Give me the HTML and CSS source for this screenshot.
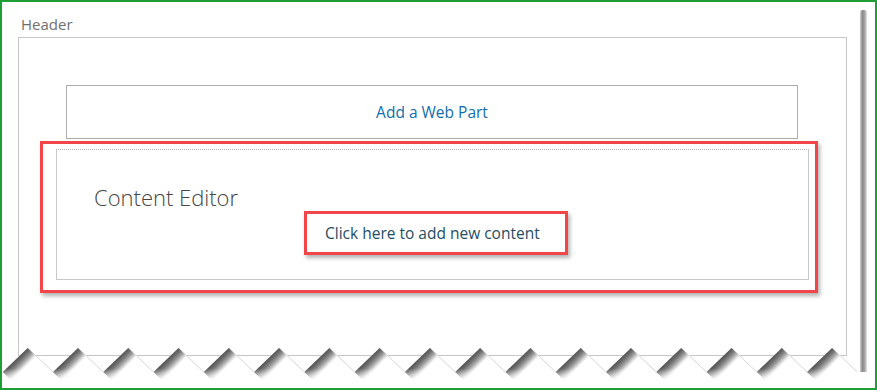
FILE: index.html
```html
<!DOCTYPE html>
<html lang="en">
  <head>
    <meta charset="UTF-8" />
    <title>Content Editor</title>
    <link rel="stylesheet" href="styles.css">
  </head>
  <body>
    <div class="frame">
      <div class="page">
        <div class="zone-label">Header</div>
        <div class="zone">
          <div class="add-part">Add a Web Part</div>
          <div class="highlight">
            <div class="editor">
              <div class="editor-title">Content Editor</div>
              <div class="click-box">Click here to add new content</div>
            </div>
          </div>
        </div>
      </div>
      <div class="edge-shadow"></div>

      <svg class="torn" viewBox="0 338 877 50" width="877" height="50">
        <defs>
          <linearGradient id="shade" gradientUnits="userSpaceOnUse" x1="12.5" y1="12.5" x2="21" y2="21">
            <stop offset="0" stop-color="#555555" />
            <stop offset="0.3" stop-color="#747474" />
            <stop offset="0.6" stop-color="#a8a8a8" />
            <stop offset="0.85" stop-color="#e2e2e2" />
            <stop offset="1" stop-color="#ffffff" />
          </linearGradient>
          <linearGradient id="fade" gradientUnits="userSpaceOnUse" x1="0" y1="0" x2="0" y2="34">
            <stop offset="0" stop-color="#fff" />
            <stop offset="0.6" stop-color="#fff" />
            <stop offset="1" stop-color="#000" />
          </linearGradient>
          <mask id="fade-mask" maskUnits="userSpaceOnUse" x="-5" y="-5" width="60" height="45">
            <rect x="-5" y="-5" width="60" height="45" fill="url(#fade)" />
          </mask>
          <g id="tooth">
            <polygon points="0,24 25,0 50.3,24 50.3,60 0,60" fill="#fff" />
            <polyline points="25,0 50.3,24" fill="none" stroke="#d6d6d6" stroke-width="1" />
            <polygon points="0,24 25,0 34,9 9,33" fill="url(#shade)" mask="url(#fade-mask)" />
          </g>
        </defs>
        <use href="#tooth" x="2.7" y="348" />
        <use href="#tooth" x="52.97" y="348" />
        <use href="#tooth" x="103.24" y="348" />
        <use href="#tooth" x="153.51" y="348" />
        <use href="#tooth" x="203.78" y="348" />
        <use href="#tooth" x="254.05" y="348" />
        <use href="#tooth" x="304.32" y="348" />
        <use href="#tooth" x="354.59" y="348" />
        <use href="#tooth" x="404.86" y="348" />
        <use href="#tooth" x="455.13" y="348" />
        <use href="#tooth" x="505.4" y="348" />
        <use href="#tooth" x="555.67" y="348" />
        <use href="#tooth" x="605.94" y="348" />
        <use href="#tooth" x="656.21" y="348" />
        <use href="#tooth" x="706.48" y="348" />
        <use href="#tooth" x="756.75" y="348" />
        <use href="#tooth" x="807.02" y="348" />
      </svg>
    </div>
  </body>
</html>
```

FILE: styles.css
```css
* {
  box-sizing: border-box;
  margin: 0;
  padding: 0;
}

body {
  background-color: #fff;
  font-family: "Open Sans", "Liberation Sans", sans-serif;
}

.frame {
  position: relative;
  display: flex;
  width: 877px;
  height: 390px;
  border: 2px solid #1f9e34;
  background-color: #fff;
  overflow: hidden;
}

.page {
  width: 857px;
  padding-left: 16px;
}

.edge-shadow {
  width: 7px;
  height: 362px;
  margin: 8px 0 0 1px;
  border-radius: 3px 3px 0 0;
  background: linear-gradient(to right, #cfcfcf, #8a8a8a 35%, #a2a2a2 65%, #e4e4e4);
}

.zone-label {
  height: 35px;
  padding: 13px 0 0 3px;
  font-size: 15px;
  line-height: 19px;
  color: #707070;
}

.zone {
  width: 829px;
  height: 319px;
  border: 1px solid #c6c6c6;
}

.add-part {
  display: flex;
  align-items: center;
  justify-content: center;
  width: 732px;
  height: 54px;
  margin: 47px 0 0 47px;
  border: 1px solid #adadad;
  font-size: 15.5px;
  color: #0f6fae;
}

.highlight {
  width: 778px;
  height: 152px;
  margin: 2px 0 0 21px;
  padding: 5px 0 0 13px;
  border: 3px solid #f14649;
  box-shadow: 2px 3px 4px rgba(0, 0, 0, 0.3);
}

.editor {
  width: 753px;
  height: 131px;
  padding: 34px 0 0 37px;
  border: 1px solid #c8c8c8;
  border-top: 1px dotted #b0b0b0;
}

.editor-title {
  font-size: 22px;
  font-weight: 300;
  line-height: 26px;
  color: #444;
}

.click-box {
  width: 264px;
  height: 44px;
  margin: 1px 0 0 210px;
  padding-left: 18px;
  border: 3px solid #f14649;
  box-shadow: 2px 3px 4px rgba(0, 0, 0, 0.3);
  font-size: 15.5px;
  line-height: 38px;
  color: #1f4d63;
}

.torn {
  position: absolute;
  left: -2px;
  top: 336px;
}
```
